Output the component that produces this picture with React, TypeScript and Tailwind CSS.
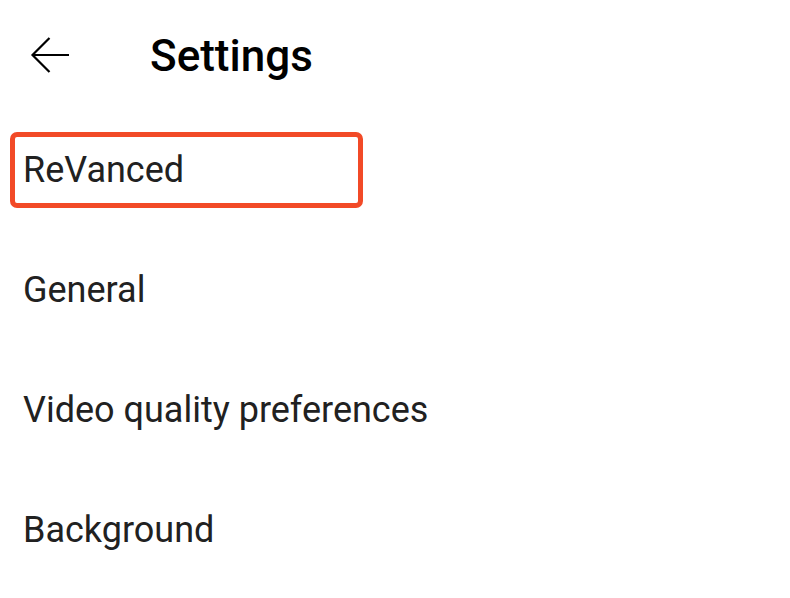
const items = ["General", "Video quality preferences", "Background"];

function BackArrow() {
  return (
    <svg width="40" height="40" viewBox="0 0 40 40" fill="none" stroke="#000" strokeWidth="2.2" strokeLinecap="butt">
      <path d="M39 20H2.5" />
      <path d="M19.5 3 2.5 20l17 17" />
    </svg>
  );
}

export default function App() {
  return (
    <div className="h-[598px] w-[790px] bg-white font-['Roboto',sans-serif]">
      <header className="flex h-[110px] items-center">
        <div className="flex w-[150px] items-center pl-[30px]">
          <BackArrow />
        </div>
        <h1 className="mt-[2px] text-[44px] font-medium leading-none text-black">Settings</h1>
      </header>
      <ul className="flex flex-col">
        <li className="flex h-[120px] items-center">
          <div className="ml-[10px] flex h-[76px] w-[353px] items-center rounded-[7px] border-[5px] border-[#f24a27] pl-[8px]">
            <span className="text-[36px] leading-none text-[#212121]">ReVanced</span>
          </div>
        </li>
        {items.map((label) => (
          <li key={label} className="flex h-[120px] items-center pl-[23px]">
            <span className="text-[36px] leading-none text-[#212121]">{label}</span>
          </li>
        ))}
      </ul>
    </div>
  );
}
